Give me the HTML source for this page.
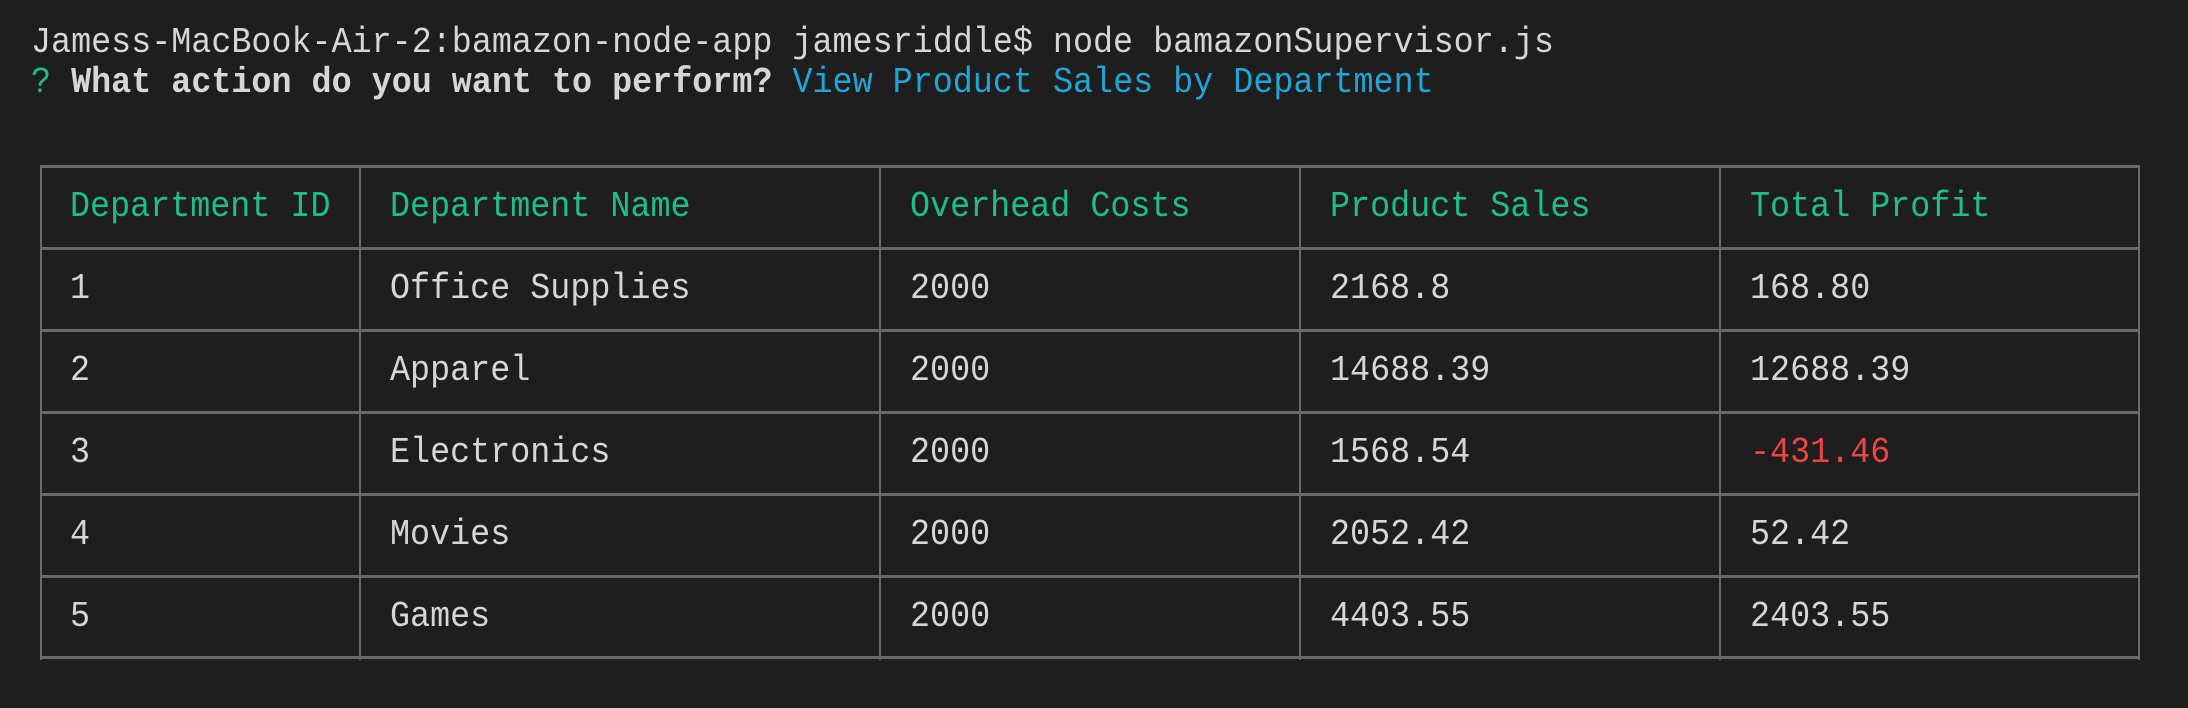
<!DOCTYPE html>
<html><head><meta charset="utf-8"><style>
body{margin:0;width:2188px;height:708px;background:#1e1e1e;overflow:hidden;font-family:"Liberation Mono",monospace;font-size:33.4px;color:#d6d6d6;position:relative}
.l{position:absolute;left:31px;white-space:pre;line-height:40px;transform:scaleY(1.08);transform-origin:left 70%}
.g{color:#1dbf86}.b{color:#1fa6d6}.r{color:#ef4444}
.h{position:absolute;left:40px;width:2100px;height:3px;background:#686868}
.v{position:absolute;top:166px;height:494px;width:2px;background:#6a6a6a}
.c{position:absolute;white-space:pre;line-height:40px;transform:scaleY(1.08);transform-origin:left 70%}
</style></head><body>
<div class="l" style="top:24px">Jamess-MacBook-Air-2:bamazon-node-app jamesriddle$ node bamazonSupervisor.js</div>
<div class="l" style="top:64px"><span class="g">?</span> <b>What action do you want to perform?</b> <span class="b">View Product Sales by Department</span></div>

<div class="h" style="top:165px"></div>
<div class="h" style="top:247px"></div>
<div class="h" style="top:329px"></div>
<div class="h" style="top:411px"></div>
<div class="h" style="top:493px"></div>
<div class="h" style="top:575px"></div>
<div class="h" style="top:656px"></div>
<div class="v" style="left:40px"></div>
<div class="v" style="left:359px"></div>
<div class="v" style="left:879px"></div>
<div class="v" style="left:1299px"></div>
<div class="v" style="left:1719px"></div>
<div class="v" style="left:2138px"></div>

<div class="c g" style="left:70px;top:188px">Department ID</div>
<div class="c g" style="left:390px;top:188px">Department Name</div>
<div class="c g" style="left:910px;top:188px">Overhead Costs</div>
<div class="c g" style="left:1330px;top:188px">Product Sales</div>
<div class="c g" style="left:1750px;top:188px">Total Profit</div>

<div class="c" style="left:70px;top:270px">1</div>
<div class="c" style="left:390px;top:270px">Office Supplies</div>
<div class="c" style="left:910px;top:270px">2000</div>
<div class="c" style="left:1330px;top:270px">2168.8</div>
<div class="c" style="left:1750px;top:270px">168.80</div>

<div class="c" style="left:70px;top:352px">2</div>
<div class="c" style="left:390px;top:352px">Apparel</div>
<div class="c" style="left:910px;top:352px">2000</div>
<div class="c" style="left:1330px;top:352px">14688.39</div>
<div class="c" style="left:1750px;top:352px">12688.39</div>

<div class="c" style="left:70px;top:434px">3</div>
<div class="c" style="left:390px;top:434px">Electronics</div>
<div class="c" style="left:910px;top:434px">2000</div>
<div class="c" style="left:1330px;top:434px">1568.54</div>
<div class="c r" style="left:1750px;top:434px">-431.46</div>

<div class="c" style="left:70px;top:516px">4</div>
<div class="c" style="left:390px;top:516px">Movies</div>
<div class="c" style="left:910px;top:516px">2000</div>
<div class="c" style="left:1330px;top:516px">2052.42</div>
<div class="c" style="left:1750px;top:516px">52.42</div>

<div class="c" style="left:70px;top:598px">5</div>
<div class="c" style="left:390px;top:598px">Games</div>
<div class="c" style="left:910px;top:598px">2000</div>
<div class="c" style="left:1330px;top:598px">4403.55</div>
<div class="c" style="left:1750px;top:598px">2403.55</div>
</body></html>
